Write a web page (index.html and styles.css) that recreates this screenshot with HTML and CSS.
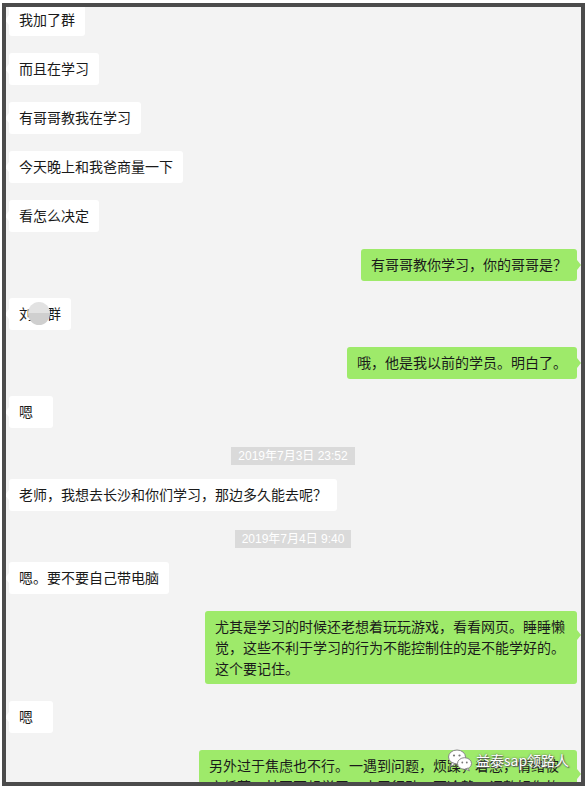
FILE: index.html
```html
<!DOCTYPE html>
<html lang="zh-CN">
<head>
<meta charset="UTF-8">
<meta name="viewport" content="width=device-width, initial-scale=1.0">
<title>聊天记录</title>
<link rel="stylesheet" href="styles.css">
</head>
<body>
    <div class="frame">
        <div class="chat">
            <div class="msg left">我加了群</div>
            <div class="msg left">而且在学习</div>
            <div class="msg left">有哥哥教我在学习</div>
            <div class="msg left">今天晚上和我爸商量一下</div>
            <div class="msg left">看怎么决定</div>
            <div class="msg right">有哥哥教你学习，你的哥哥是？</div>
            <div class="msg left">刘<span class="hidden-name">小<span class="blur"></span></span>群</div>
            <div class="msg right">哦，他是我以前的学员。明白了。</div>
            <div class="msg left">嗯</div>
            <div class="time">2019年7月3日 23:52</div>
            <div class="msg left">老师，我想去长沙和你们学习，那边多久能去呢？</div>
            <div class="time">2019年7月4日 9:40</div>
            <div class="msg left">嗯。要不要自己带电脑</div>
            <div class="msg right multi">尤其是学习的时候还老想着玩玩游戏，看看网页。睡睡懒觉，这些不利于学习的行为不能控制住的是不能学好的。这个要记住。</div>
            <div class="msg left">嗯</div>
            <div class="msg right multi wide">另外过于焦虑也不行。一遇到问题，烦躁，着急，情绪被度低落，甚至不想学习，止于行动，要冷静，调整好你的心理状态。</div>
        </div>

        <!-- watermark over the chat -->
        <div class="mark">
            <svg width="26" height="24" viewBox="0 0 26 24">
                <ellipse cx="10" cy="9" rx="8.5" ry="7" fill="#fff" stroke="#888" stroke-width="1"/>
                <path d="M5 14.5 L3.5 18.5 L8.5 15.8 Z" fill="#fff" stroke="#888" stroke-width="1"/>
                <circle cx="7" cy="7.5" r="1.1" fill="#777"/>
                <circle cx="12.5" cy="7.5" r="1.1" fill="#777"/>
                <ellipse cx="17.5" cy="15.5" rx="7" ry="5.8" fill="#fff" stroke="#888" stroke-width="1"/>
                <path d="M21 20 L22.5 23 L18.5 21 Z" fill="#fff" stroke="#888" stroke-width="1"/>
                <circle cx="15.3" cy="14.5" r="0.9" fill="#777"/>
                <circle cx="19.8" cy="14.5" r="0.9" fill="#777"/>
            </svg>
            <span>益泰sap领路人</span>
        </div>
    </div>
</body>
</html>
```

FILE: styles.css
```css
body{
  margin: 0;
  background-color: #fff;
  font-family: "Noto Sans CJK SC", "Liberation Sans", sans-serif;
}

.frame{
  position: relative;
  box-sizing: border-box;
  margin: 3px 0 0 2px;
  width: 583px;
  height: 783px;
  border: 4px solid #4b4b4b;
  background-color: #f3f3f3;
  overflow: hidden;
}

.chat{
  display: flex;
  flex-direction: column;
  gap: 17px;
  margin-top: -3px;
  padding: 0 4px 0 3px;
}

.msg{
  position: relative;
  box-sizing: border-box;
  min-width: 44px;
  max-width: 372px;
  padding: 5px 10px 6px;
  border-radius: 3px;
  font-size: 14px;
  line-height: 21px;
  color: #1a1a1a;
}

.msg::before{
  content: "";
  position: absolute;
  top: 50%;
  margin-top: -5px;
  border-top: 5px solid transparent;
  border-bottom: 5px solid transparent;
}

.left{
  align-self: flex-start;
  background-color: #fff;
}

.left::before{
  left: -4px;
  border-right: 4px solid #fff;
}

.right{
  align-self: flex-end;
  background-color: #9eea6a;
}

.right::before{
  right: -4px;
  border-left: 4px solid #9eea6a;
}

.multi{
  padding: 5px 10px;
}

.multi::before{
  top: 24px;
}

.wide{
  max-width: 378px;
}

.hidden-name{
  position: relative;
}

.blur{
  position: absolute;
  left: -5px;
  top: -1px;
  width: 22px;
  height: 23px;
  border-radius: 50%;
  background: linear-gradient(#e2e2e2 50%, #cfcfcf 50%);
}

.time{
  align-self: center;
  margin: 2px 0 -3px 0;
  padding: 0 7px;
  height: 18px;
  line-height: 18px;
  background-color: #dadada;
  color: #fff;
  font-family: "Liberation Sans", "Noto Sans CJK SC", sans-serif;
  font-size: 12px;
}

.mark{
  position: absolute;
  left: 441px;
  top: 741px;
  display: flex;
  align-items: center;
  gap: 3px;
  color: #fff;
  font-size: 14px;
  text-shadow: 0 0 2px #555, 1px 1px 1px #555;
}
```
